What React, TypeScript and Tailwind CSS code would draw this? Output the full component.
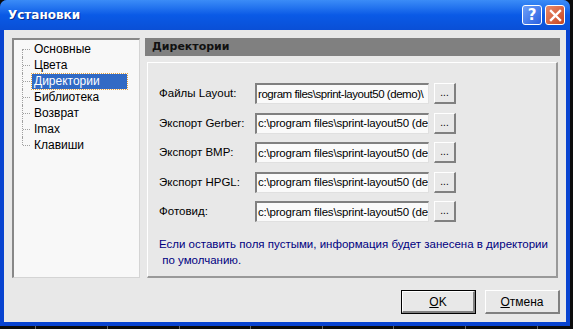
import React from "react";

const items = ["Основные", "Цвета", "Директории", "Библиотека", "Возврат", "Imax", "Клавиши"];

const rows = [
  { label: "Файлы Layout:", value: "rogram files\\sprint-layout50 (demo)\\", tight: true },
  { label: "Экспорт Gerber:", value: "c:\\program files\\sprint-layout50 (de", tight: false },
  { label: "Экспорт BMP:", value: "c:\\program files\\sprint-layout50 (de", tight: false },
  { label: "Экспорт HPGL:", value: "c:\\program files\\sprint-layout50 (de", tight: false },
  { label: "Фотовид:", value: "c:\\program files\\sprint-layout50 (de", tight: false },
];

export default function App() {
  return (
    <div
      className="w-[573px] h-[329px] bg-[#0c0c0c] overflow-hidden relative"
      style={{ fontFamily: '"Liberation Sans", Arial, sans-serif' }}
    >
      <div className="w-[570px] h-[326px] flex flex-col rounded-t-[7px] overflow-hidden bg-[#0843d0]">
        {/* title bar */}
        <div className="h-[30px] flex items-center pl-[6px] pr-[5px] bg-gradient-to-b from-[#3b8cf7] via-[#0a5ae6] to-[#0a4fd6] relative">
          <span
            className="text-white font-bold text-[12px] ml-[2px]"
            style={{ fontFamily: '"DejaVu Sans", sans-serif', textShadow: "1px 1px 0 #0a2a8a" }}
          >
            Установки
          </span>
          <div className="ml-auto flex gap-[3px] items-center">
            <div className="w-[20px] h-[20px] rounded-[3px] border border-white bg-gradient-to-br from-[#6fa0f8] to-[#2a5ee0] flex items-center justify-center text-white font-bold text-[15px]" style={{ fontFamily: '"DejaVu Sans", sans-serif' }}>
              ?
            </div>
            <div className="w-[20px] h-[20px] rounded-[3px] border border-white bg-gradient-to-br from-[#e88a6a] to-[#c8431c] flex items-center justify-center">
              <svg width="13" height="13" viewBox="0 0 13 13">
                <path d="M2 2 L11 11 M11 2 L2 11" stroke="white" strokeWidth="2.4" strokeLinecap="square" />
              </svg>
            </div>
          </div>
        </div>
        {/* body */}
        <div className="flex-1 mx-[4px] mb-[4px] bg-[#e8e8e8] flex flex-col text-[11px] text-black">
          <div className="flex pt-[8px] pl-[8px] pr-[6px] gap-[5px]">
            {/* tree */}
            <div className="w-[128px] h-[240px] bg-[#f8f8f8] border-t-2 border-l-2 border-t-[#888888] border-l-[#888888] border-b border-r border-b-[#d4d4d4] border-r-[#d4d4d4] pt-[1px] pl-[7px]">
              {items.map((it, i) => (
                <div key={it} className="h-[16px] flex items-center">
                  <div className="relative w-[11px] h-[16px] shrink-0">
                    <div className={"absolute left-[1px] border-l border-dotted border-[#a0a0a0] " + (i === 0 ? "top-[8px] h-[8px]" : i === items.length - 1 ? "top-0 h-[8px]" : "top-0 h-[16px]")} />
                    <div className="absolute left-[2px] top-[8px] w-[7px] border-t border-dotted border-[#a0a0a0]" />
                  </div>
                  <span
                    className={
                      "px-[2px] leading-[15px] h-[15px] text-[12px] " +
                      (i === 2 ? "bg-[#316ac5] text-white outline outline-1 outline-dotted outline-[#e0a040] w-[95px]" : "")
                    }
                  >
                    {it}
                  </span>
                </div>
              ))}
            </div>
            {/* right panel */}
            <div className="flex-1 flex flex-col gap-[6px]">
              <div className="h-[18px] bg-[#808080] flex items-center pl-[7px] font-bold text-[#111]" style={{ fontFamily: '"DejaVu Sans", sans-serif', fontSize: "11px" }}>
                Директории
              </div>
              <div className="h-[216px] mx-[2px] border-t border-l border-t-white border-l-white border-b-2 border-r-2 border-b-[#999999] border-r-[#999999] flex flex-col pl-[11px] pt-[16px]">
                {rows.map((r) => (
                  <div key={r.label} className="h-[29.5px] shrink-0 flex items-center">
                    <span className="w-[96px] shrink-0 text-[11.5px]">{r.label}</span>
                    <div
                      className={
                        "w-[174px] h-[21px] bg-[#fafafa] border-t-2 border-l-2 border-t-[#808080] border-l-[#808080] border-b border-r border-b-[#e0e0e0] border-r-[#e0e0e0] flex items-center pl-[1px] overflow-hidden whitespace-nowrap text-[11.5px] " +
                        (r.tight ? "tracking-[-0.45px]" : "tracking-[-0.2px]")
                      }
                    >
                      {r.value}
                    </div>
                    <div className="ml-[5px] w-[22px] h-[21px] border-t border-l border-t-white border-l-white border-b-2 border-r-2 border-b-[#808080] border-r-[#808080] flex items-end justify-center pb-[4px] text-[10px] leading-none">
                      ...
                    </div>
                  </div>
                ))}
                <div className="mt-[9px] text-[#000080] leading-[16px] text-[11.5px] whitespace-nowrap">
                  Если оставить поля пустыми, информация будет занесена в директории
                  <br />
                  &nbsp;по умолчанию.
                </div>
              </div>
            </div>
          </div>
          <div className="flex justify-end gap-[9px] pr-[6px] mt-[12px] text-[12px]">
            <div className="w-[75px] h-[24px] border border-black flex">
              <div className="flex-1 border-t border-l border-t-white border-l-white border-b-2 border-r-2 border-b-[#808080] border-r-[#808080] flex items-center justify-center">
                <span><span className="underline">O</span>K</span>
              </div>
            </div>
            <div className="w-[75px] h-[24px] border-t border-l border-t-white border-l-white border-b-2 border-r-2 border-b-[#808080] border-r-[#808080] flex items-center justify-center">
              <span><span className="underline">О</span>тмена</span>
            </div>
          </div>
        </div>
      </div>
      <div className="absolute left-0 top-[326px] w-[573px] h-[3px] flex justify-around">
        {Array.from({ length: 8 }).map((_, i) => (
          <div key={i} className="w-[1px] h-[3px] bg-[#666]" />
        ))}
      </div>
    </div>
  );
}
